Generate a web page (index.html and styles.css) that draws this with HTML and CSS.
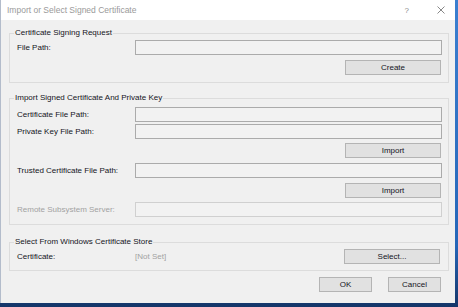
FILE: index.html
```html
<!DOCTYPE html>
<html>
<head>
<meta charset="utf-8">
<link rel="stylesheet" href="styles.css">
</head>
<body>
<div class="window">
  <div class="titlebar">
    <span class="title">Import or Select Signed Certificate</span>
    <span class="tb-help">?</span>
    <svg class="tb-close" width="8" height="8" viewBox="0 0 8 8"><path d="M0.5 0.5 L7.5 7.5 M7.5 0.5 L0.5 7.5" stroke="#7a7a7a" stroke-width="0.9" fill="none"/></svg>
  </div>
  <div class="client">
    <fieldset class="group g1">
      <legend>Certificate Signing Request</legend>
      <div class="row"><span class="label">File Path:</span><div class="input"></div></div>
      <div class="row mt5"><span></span><button class="btn wide">Create</button></div>
    </fieldset>

    <fieldset class="group g2">
      <legend>Import Signed Certificate And Private Key</legend>
      <div class="row"><span class="label">Certificate File Path:</span><div class="input"></div></div>
      <div class="row mt2"><span class="label">Private Key File Path:</span><div class="input"></div></div>
      <div class="row mt4"><span></span><button class="btn wide">Import</button></div>
      <div class="row mt5"><span class="label">Trusted Certificate File Path:</span><div class="input"></div></div>
      <div class="row mt5"><span></span><button class="btn wide">Import</button></div>
      <div class="row mt4"><span class="label disabled">Remote Subsystem Server:</span><div class="input dis"></div></div>
    </fieldset>

    <fieldset class="group g3">
      <legend>Select From Windows Certificate Store</legend>
      <div class="row3"><span class="label">Certificate:</span><span class="value">[Not Set]</span><button class="btn wide">Select...</button></div>
    </fieldset>

    <div class="footer">
      <button class="btn small">OK</button>
      <button class="btn small">Cancel</button>
    </div>
  </div>
</div>
</body>
</html>
```

FILE: styles.css
```css
html, body {
  margin: 0;
  padding: 0;
}
body {
  width: 458px;
  height: 307px;
  overflow: hidden;
  background: linear-gradient(to bottom, #3b7fd0 0%, #2566b8 80%, #153568 100%);
  font-family: "Liberation Sans", Arial, sans-serif;
  font-size: 8px;
  color: #14141c;
}
.window {
  width: 454px;
  height: 303px;
  background: #f0f0f0;
  border-left: 1px solid #b3bccb;
  display: flex;
  flex-direction: column;
}
.titlebar {
  height: 20px;
  background: #ffffff;
  display: flex;
  align-items: center;
  padding-left: 6px;
  box-sizing: border-box;
}
.title {
  font-size: 8.5px;
  color: #9a9a9a;
  flex: 1;
}
.tb-help {
  color: #8a8a8a;
  font-size: 8px;
  margin-right: 28px;
}
.tb-close {
  margin-right: 10px;
}
.client {
  padding: 7px 6px 0 8px;
}
.group {
  margin: 0;
  padding: 1px 6px 7px 6px;
  border: 1px solid #dcdcdc;
  min-width: 0;
}
.group legend {
  padding: 0 1px;
  margin-left: -2px;
  line-height: 12px;
  height: 12px;
  color: #14141c;
}
.g2 {
  margin-top: 9px;
  padding-top: 3px;
}
.g3 {
  margin-top: 11px;
  padding-bottom: 6px;
}
.row {
  display: grid;
  grid-template-columns: 119px 1fr;
  align-items: center;
  height: 15px;
}
.row3 {
  display: grid;
  grid-template-columns: 119px 1fr 96px;
  align-items: center;
  height: 15px;
  padding-right: 1px;
}
.mt2 { margin-top: 2px; }
.mt4 { margin-top: 4px; }
.mt5 { margin-top: 5px; }
.label {
  padding-left: 1px;
  white-space: nowrap;
}
.label.disabled, .value {
  color: #a2a2a2;
}
.input {
  height: 15px;
  box-sizing: border-box;
  border: 1px solid #ababab;
  background: #f2f2f2;
}
.input.dis {
  border-color: #d0d0d0;
}
.btn {
  font-family: "Liberation Sans", Arial, sans-serif;
  font-size: 8px;
  color: #14141c;
  height: 15px;
  box-sizing: border-box;
  border: 1px solid #b4b4b4;
  background: #e1e1e1;
  padding: 0;
  line-height: 13px;
}
.wide {
  width: 96px;
  justify-self: end;
  margin-right: 1px;
}
.footer {
  margin-top: 6px;
  display: flex;
  justify-content: flex-end;
  gap: 16px;
  padding-right: 8px;
}
.small {
  width: 53px;
}
```
